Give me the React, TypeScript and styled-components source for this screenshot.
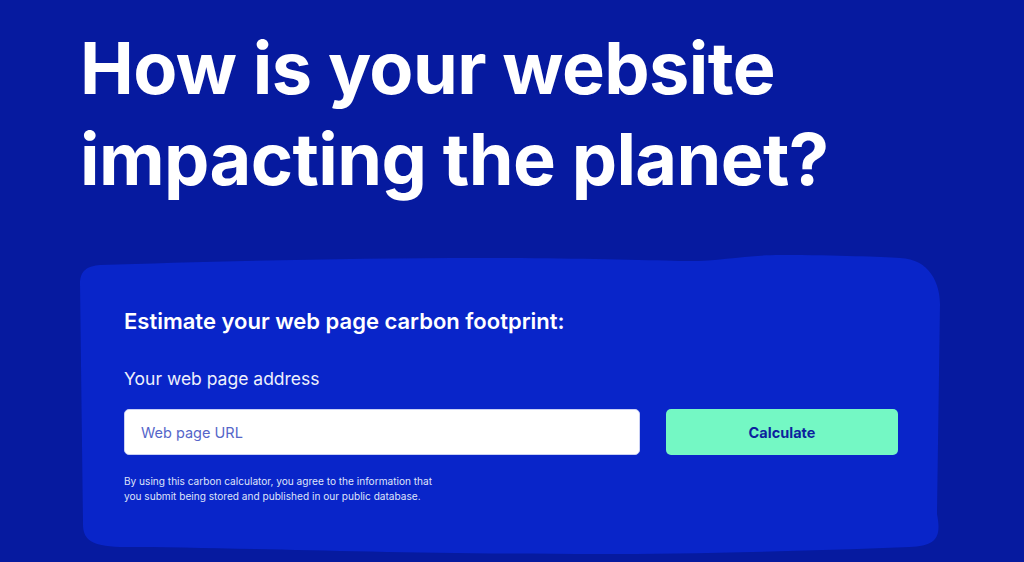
import React from 'react'
import styled, { createGlobalStyle } from 'styled-components'

const GlobalStyle = createGlobalStyle`
    html, body {
        margin: 0;
        padding: 0;
        background: #061a9f;
    }
    body {
        font-family: Inter, 'Noto Sans', 'Liberation Sans', sans-serif;
        -webkit-font-smoothing: antialiased;
    }
    * {
        box-sizing: border-box;
    }
`

const Page = styled.main`
    width: 1024px;
    height: 562px;
    overflow: hidden;
    background: #061a9f;
    padding: 22px 0 0 80px;
`

const Title = styled.h1`
    margin: 0;
    color: #fff;
    font-size: 72px;
    line-height: 91px;
    font-weight: 700;
    letter-spacing: -0.6px;
`

const Card = styled.section`
    width: 863px;
    height: 301px;
    margin-top: 50px;
    padding: 53px 45px 0 44px;
    background: #0925c9;
    clip-path: path(
        'M 0 30 C 0 16 8 12 20 11 C 120 8 260 4 400 4 C 480 4 560 6 600 7 C 640 8 660 1 700 1 C 760 1 800 3 820 4 C 850 5 860 30 860 50 L 857 260 C 862 285 855 292 830 293 C 700 298 600 300 520 300 C 300 300 150 293 40 293 C 10 292 3 285 3 270 L 0 30 Z'
    );
`

const Heading = styled.h2`
    margin: 0;
    color: #fff;
    font-size: 22px;
    line-height: 28px;
    font-weight: 600;
`

const Label = styled.label`
    display: block;
    margin-top: 32px;
    color: #eef0fc;
    font-size: 17.5px;
    line-height: 24px;
    font-weight: 400;
`

const Row = styled.div`
    display: grid;
    grid-template-columns: 1fr 232px;
    gap: 26px;
    margin-top: 18px;
`

const UrlInput = styled.input`
    height: 46px;
    width: 100%;
    padding: 0 16px;
    border: 1px solid #c9d0f4;
    border-radius: 5px;
    background: #fff;
    font-family: inherit;
    font-size: 14.5px;
    color: #0b1fa1;
    outline: none;

    &::placeholder {
        color: #5566c9;
    }
`

const Button = styled.button`
    height: 46px;
    border: none;
    border-radius: 5px;
    background: #74f8c4;
    color: #0c1f9e;
    font-family: inherit;
    font-size: 14.5px;
    font-weight: 700;
    cursor: pointer;
`

const Disclaimer = styled.p`
    margin: 19px 0 0;
    color: #dfe3fa;
    font-size: 10.1px;
    line-height: 15px;
`

const App = () => {
    return (
        <React.Fragment>
            <GlobalStyle />
            <Page>
                <Title>
                    How is your website
                    <br />
                    impacting the planet?
                </Title>
                <Card>
                    <Heading>Estimate your web page carbon footprint:</Heading>
                    <Label htmlFor="url">Your web page address</Label>
                    <Row>
                        <UrlInput id="url" type="text" placeholder="Web page URL" />
                        <Button type="button">Calculate</Button>
                    </Row>
                    <Disclaimer>
                        By using this carbon calculator, you agree to the information that
                        <br />
                        you submit being stored and published in our public database.
                    </Disclaimer>
                </Card>
            </Page>
        </React.Fragment>
    )
}

export default App
